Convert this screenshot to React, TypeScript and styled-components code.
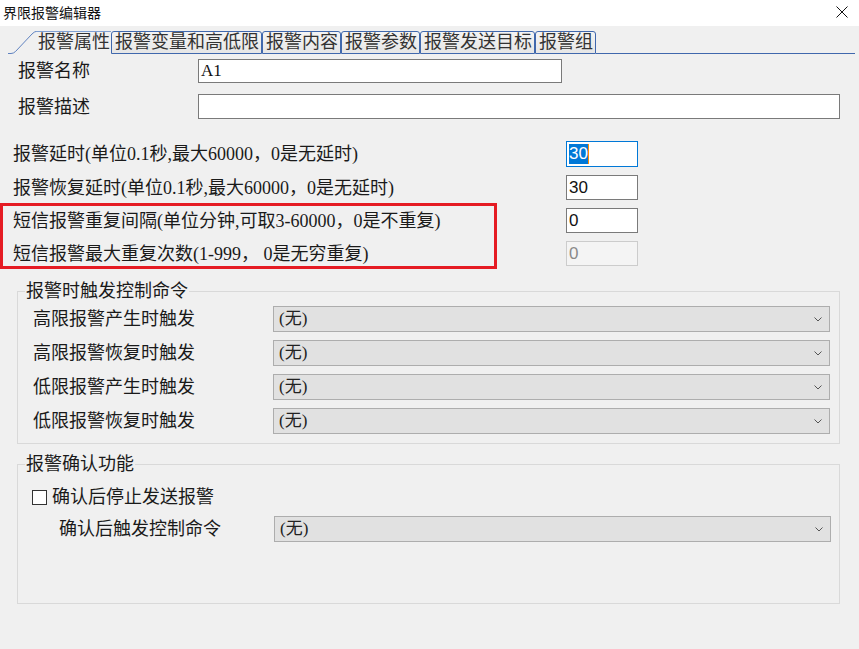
import React from "react";
import styled, { createGlobalStyle } from "styled-components";

const Global = createGlobalStyle`
  html, body { margin: 0; padding: 0; background: #f0f0f0; }
  body { font-family: "Liberation Serif", "Noto Sans CJK SC", serif; color: #1a1a1a; }
  * { box-sizing: border-box; }
`;

const Window = styled.div`
  width: 859px;
  height: 649px;
  background: #f0f0f0;
  display: flex;
  flex-direction: column;
  overflow: hidden;
`;

const TitleBar = styled.div`
  height: 26px;
  background: #ffffff;
  display: flex;
  align-items: center;
  justify-content: space-between;
  padding: 0 11px 0 3px;
`;

const Title = styled.span`
  font-family: "Noto Sans CJK SC", sans-serif;
  font-size: 14px;
  line-height: 16px;
  color: #111;
  margin-top: -2px;
`;

const CloseBtn = styled.svg`
  width: 12px;
  height: 12px;
  margin-top: -3px;
`;

const TabStrip = styled.div`
  height: 28px;
  display: flex;
  align-items: flex-end;
  padding: 0 4px 0 8px;
`;

const ActiveTab = styled.div`
  display: flex;
  align-items: flex-end;
  height: 23px;
`;

const Slant = styled.svg`
  width: 28px;
  height: 23px;
  display: block;
`;

const ActiveLabel = styled.div`
  height: 23px;
  border-top: 1px solid #7f9fd2;
  padding: 0 1px 0 2px;
  font-size: 18px;
  line-height: 21px;
  color: #333;
`;

const Tab = styled.div`
  height: 23px;
  border: 1px solid #4068ad;
  border-radius: 3px 3px 0 0;
  background: linear-gradient(#f4f4f4, #e6e6e6);
  padding: 0 2px 0 3px;
  font-size: 18px;
  line-height: 21px;
  color: #333;
`;

const TabFiller = styled.div`
  flex: 1;
  height: 1px;
  background: #4068ad;
`;

const NameGrid = styled.div`
  display: grid;
  grid-template-columns: 180px auto;
  row-gap: 11px;
  align-items: center;
  padding-left: 18px;
  margin-top: 5px;
`;

const Label = styled.span`
  font-size: 18px;
  line-height: 20px;
  white-space: nowrap;
`;

const TextBox = styled.div<{ $w: number; $h?: number; $focus?: boolean; $disabled?: boolean }>`
  width: ${(p) => p.$w}px;
  height: ${(p) => p.$h ?? 25}px;
  background: ${(p) => (p.$disabled ? "#f4f4f4" : "#ffffff")};
  border: 1px solid ${(p) => (p.$focus ? "#0078d7" : p.$disabled ? "#cccccc" : "#7a7a7a")};
  display: flex;
  align-items: center;
  padding-left: 2px;
  font-size: 17px;
  color: ${(p) => (p.$disabled ? "#8a8a8a" : "#111")};
`;

const NumText = styled.span`
  font-family: "Liberation Sans", sans-serif;
  font-size: 17px;
  line-height: 20px;
`;

const Selected = styled.span`
  font-family: "Liberation Sans", sans-serif;
  font-size: 17px;
  line-height: 20px;
  background: #0078d7;
  color: #ffffff;
  border-right: 1px solid #ff8c00;
`;

const SerifText = styled.span`
  font-family: "Liberation Serif", "Noto Sans CJK SC", serif;
  font-size: 17px;
  line-height: 20px;
`;

const DelaySection = styled.div`
  display: flex;
  flex-direction: column;
  gap: 8px;
  padding-left: 13px;
  margin-top: 22px;
`;

const DelayRow = styled.div`
  display: grid;
  grid-template-columns: 553px 72px;
  align-items: center;
`;

const Marked = styled.div`
  position: relative;
  display: flex;
  flex-direction: column;
  gap: 8px;
`;

const Highlight = styled.div`
  position: absolute;
  left: -13px;
  top: -5px;
  width: 497px;
  height: 66px;
  border: 3px solid #e51b23;
  pointer-events: none;
`;

const Group = styled.fieldset<{ $mt: number; $pt: number; $pb: number }>`
  margin: ${(p) => p.$mt}px 0 0 17px;
  width: 823px;
  border: 1px solid #d9d9d9;
  padding: ${(p) => p.$pt}px 9px ${(p) => p.$pb}px 14px;
  min-width: 0;
`;

const Legend = styled.legend`
  font-size: 18px;
  line-height: 20px;
  padding: 0 1px;
  margin-left: -7px;
`;

const CmdGrid = styled.div`
  display: grid;
  grid-template-columns: 240px 557px;
  row-gap: 8px;
  align-items: center;
  padding-left: 1px;
`;

const Combo = styled.div`
  height: 26px;
  background: #e1e1e1;
  border: 1px solid #adadad;
  display: flex;
  align-items: center;
  justify-content: space-between;
  padding: 0 7px 0 5px;
`;

const ComboText = styled.span`
  font-family: "Liberation Serif", "Noto Sans CJK SC", serif;
  font-size: 17px;
  line-height: 20px;
  color: #222;
`;

const Chevron = styled.svg`
  width: 8px;
  height: 5px;
`;

const CheckRow = styled.label`
  display: flex;
  align-items: center;
  gap: 5px;
  height: 20px;
`;

const CheckBox = styled.span`
  width: 15px;
  height: 15px;
  border: 1px solid #333;
  background: #ffffff;
  display: inline-block;
`;

const ConfirmRow = styled.div`
  display: grid;
  grid-template-columns: 215px 557px;
  align-items: center;
  margin: 9px 0 0 27px;
`;

const Select: React.FC = () => (
  <Combo>
    <ComboText>(无)</ComboText>
    <Chevron viewBox="0 0 8 5">
      <polyline points="0.5,0.5 4,4 7.5,0.5" fill="none" stroke="#555" strokeWidth="1" />
    </Chevron>
  </Combo>
);

const tabs = ["报警变量和高低限", "报警内容", "报警参数", "报警发送目标", "报警组"];
const commands = ["高限报警产生时触发", "高限报警恢复时触发", "低限报警产生时触发", "低限报警恢复时触发"];

export default function App() {
  return (
    <>
      <Global />
      <Window>
        <TitleBar>
          <Title>界限报警编辑器</Title>
          <CloseBtn viewBox="0 0 12 12">
            <path d="M0.5 0.5 L11.5 11.5 M11.5 0.5 L0.5 11.5" stroke="#111" strokeWidth="1" fill="none" />
          </CloseBtn>
        </TitleBar>
        <TabStrip>
          <ActiveTab>
            <Slant viewBox="0 0 28 23">
              <path
                d="M0 22.5 L3 22.5 Q5.5 22.5 7.5 20.5 L24 3 Q26.5 0.5 28 0.5"
                fill="none"
                stroke="#5f82c0"
                strokeWidth="1"
              />
            </Slant>
            <ActiveLabel>报警属性</ActiveLabel>
          </ActiveTab>
          {tabs.map((t) => (
            <Tab key={t}>{t}</Tab>
          ))}
          <TabFiller />
        </TabStrip>

        <NameGrid>
          <Label>报警名称</Label>
          <TextBox $w={364} $h={24}>
            <SerifText>A1</SerifText>
          </TextBox>
          <Label>报警描述</Label>
          <TextBox $w={642} $h={25} />
        </NameGrid>

        <DelaySection>
          <DelayRow>
            <Label>报警延时(单位0.1秒,最大60000，0是无延时)</Label>
            <TextBox $w={72} $h={26} $focus>
              <Selected>30</Selected>
            </TextBox>
          </DelayRow>
          <DelayRow>
            <Label>报警恢复延时(单位0.1秒,最大60000，0是无延时)</Label>
            <TextBox $w={72}>
              <NumText>30</NumText>
            </TextBox>
          </DelayRow>
          <Marked>
            <Highlight />
            <DelayRow>
              <Label>短信报警重复间隔(单位分钟,可取3-60000，0是不重复)</Label>
              <TextBox $w={72}>
                <NumText>0</NumText>
              </TextBox>
            </DelayRow>
            <DelayRow>
              <Label>短信报警最大重复次数(1-999， 0是无穷重复)</Label>
              <TextBox $w={72} $disabled>
                <NumText>0</NumText>
              </TextBox>
            </DelayRow>
          </Marked>
        </DelaySection>

        <Group $mt={15} $pt={5} $pb={9}>
          <Legend>报警时触发控制命令</Legend>
          <CmdGrid>
            {commands.map((c) => (
              <React.Fragment key={c}>
                <Label>{c}</Label>
                <Select />
              </React.Fragment>
            ))}
          </CmdGrid>
        </Group>

        <Group $mt={10} $pt={13} $pb={61}>
          <Legend>报警确认功能</Legend>
          <CheckRow>
            <CheckBox />
            <Label>确认后停止发送报警</Label>
          </CheckRow>
          <ConfirmRow>
            <Label>确认后触发控制命令</Label>
            <Select />
          </ConfirmRow>
        </Group>
      </Window>
    </>
  );
}
